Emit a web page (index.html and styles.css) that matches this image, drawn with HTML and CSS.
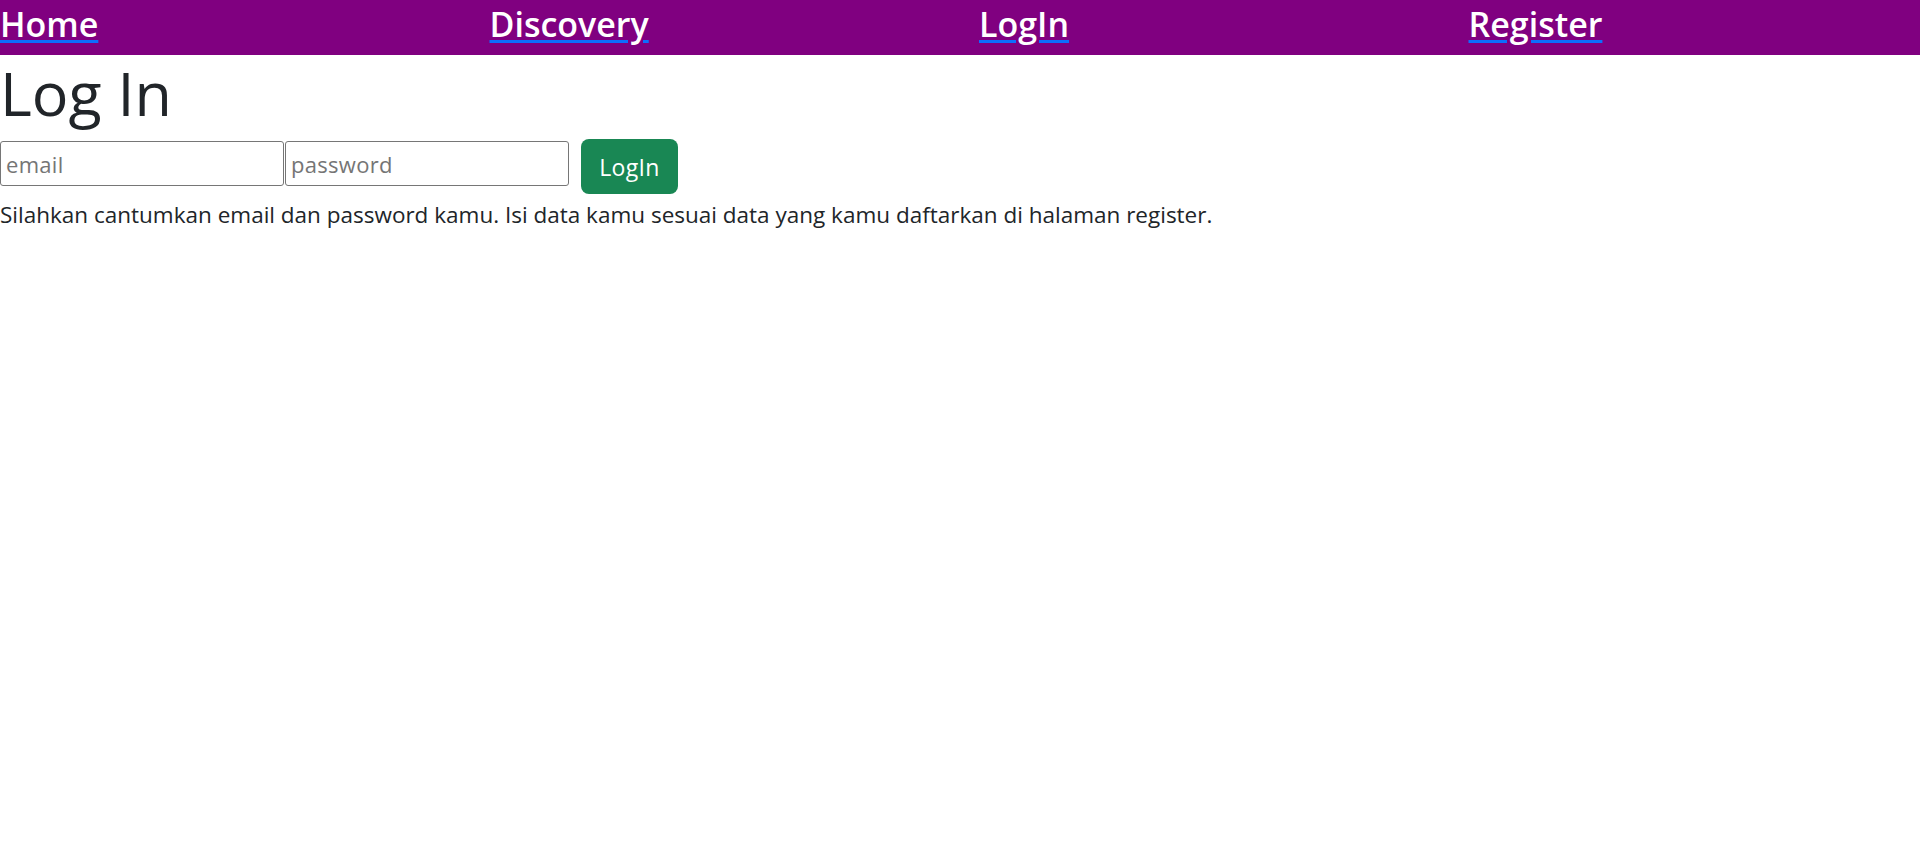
FILE: index.html
```html
<!DOCTYPE html>
<html lang="id">
<head>
<meta charset="utf-8">
<title>Log In</title>
<link rel="stylesheet" href="styles.css">
</head>
<body>
<nav class="topnav">
  <a class="navlink" href="#"><span>Home</span></a>
  <a class="navlink" href="#"><span>Discovery</span></a>
  <a class="navlink" href="#"><span>LogIn</span></a>
  <a class="navlink" href="#"><span>Register</span></a>
</nav>
<main class="content">
  <h1 class="title">Log In</h1>
  <form class="login-form">
    <input class="field" type="email" placeholder="email">
    <input class="field" type="password" placeholder="password">
    <button class="btn-login" type="button">LogIn</button>
  </form>
  <p class="note">Silahkan cantumkan email dan password kamu. Isi data kamu sesuai data yang kamu daftarkan di halaman register.</p>
</main>
</body>
</html>
```

FILE: styles.css
```css
html, body {
  margin: 0;
  padding: 0;
  background: #ffffff;
}
body {
  font-family: "Open Sans", "Noto Sans", sans-serif;
  color: #212529;
}
.topnav {
  display: grid;
  grid-template-columns: repeat(4, 489.5px);
  height: 55px;
  background: #800080;
  align-items: start;
}
.navlink {
  display: block;
  justify-self: start;
  padding-top: 3px;
  font-size: 34px;
  font-weight: 600;
  line-height: 42px;
  color: #0d6efd;
  text-decoration: underline;
  text-decoration-color: #0d6efd;
  text-decoration-thickness: 3px;
  text-underline-offset: 3px;
}
.navlink span {
  color: #ffffff;
}
.title {
  margin: 0 0 9px 0;
  padding-top: 1px;
  font-size: 61px;
  font-weight: 500;
  line-height: 74px;
}
.login-form {
  display: flex;
  align-items: flex-start;
  margin: 0;
}
.field {
  box-sizing: border-box;
  width: 284px;
  height: 45px;
  margin: 2px 1px 0 0;
  padding: 0 5px;
  border: 1px solid #767676;
  border-radius: 3px;
  font-family: inherit;
  font-size: 22px;
  letter-spacing: 0.3px;
  color: #212529;
}
.field::placeholder {
  color: #757575;
}
.btn-login {
  box-sizing: border-box;
  width: 97px;
  height: 55px;
  margin-left: 11px;
  padding: 0;
  border: none;
  border-radius: 8px;
  background: #198754;
  color: #ffffff;
  font-family: inherit;
  font-size: 23px;
  letter-spacing: 0.3px;
}
.note {
  margin: 4px 0 0 0;
  font-size: 22.5px;
  line-height: 1.5;
}
```
